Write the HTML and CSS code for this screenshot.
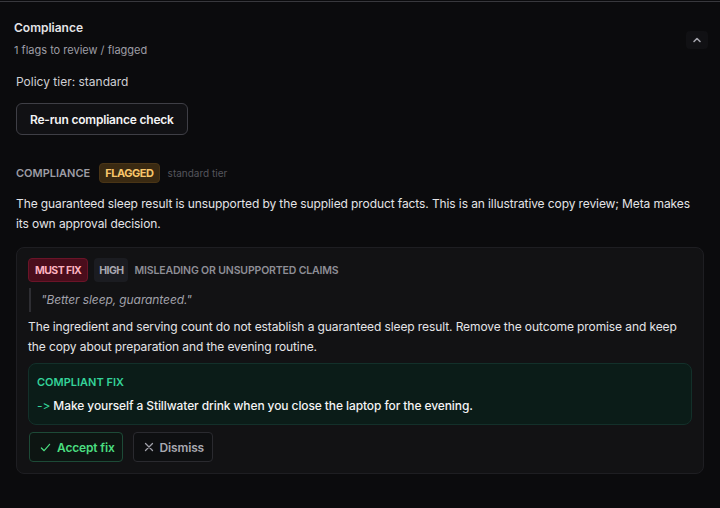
FILE: index.html
```html
<!DOCTYPE html>
<html lang="en">
<head>
<meta charset="utf-8">
<title>Compliance</title>
<link rel="stylesheet" href="styles.css">
</head>
<body>
<section class="panel">
  <header class="panel-head">
    <div class="head-text">
      <h2 class="title">Compliance</h2>
      <p class="subtitle">1 flags to review / flagged</p>
    </div>
    <button class="collapse" aria-label="Collapse">
      <svg width="10" height="10" viewBox="0 0 10 10"><path d="M2 6.5 L5 3.5 L8 6.5" fill="none" stroke="#a1a1aa" stroke-width="1.6" stroke-linecap="round" stroke-linejoin="round"/></svg>
    </button>
  </header>
  <div class="panel-body">
    <p class="tier">Policy tier: standard</p>
    <button class="btn-rerun">Re-run compliance check</button>

    <div class="status-row">
      <span class="status-label">COMPLIANCE</span>
      <span class="badge badge-flagged">FLAGGED</span>
      <span class="status-tier">standard tier</span>
    </div>
    <p class="summary">The guaranteed sleep result is unsupported by the supplied product facts. This is an illustrative copy review; Meta makes its own approval decision.</p>

    <article class="flag-card">
      <div class="flag-tags">
        <span class="badge badge-must">MUST FIX</span>
        <span class="badge badge-high">HIGH</span>
        <span class="flag-cat">MISLEADING OR UNSUPPORTED CLAIMS</span>
      </div>
      <blockquote class="quote">"Better sleep, guaranteed."</blockquote>
      <p class="reason">The ingredient and serving count do not establish a guaranteed sleep result. Remove the outcome promise and keep the copy about preparation and the evening routine.</p>
      <div class="fix-box">
        <div class="fix-label">COMPLIANT FIX</div>
        <div class="fix-text"><span class="arrow">-&gt;</span> Make yourself a Stillwater drink when you close the laptop for the evening.</div>
      </div>
      <div class="actions">
        <button class="btn-act btn-accept">
          <svg width="11" height="11" viewBox="0 0 12 12"><path d="M1.5 6.5 L4.5 9.5 L10.5 2.5" fill="none" stroke="#4ade80" stroke-width="1.3" stroke-linecap="round" stroke-linejoin="round"/></svg>
          Accept fix
        </button>
        <button class="btn-act btn-dismiss">
          <svg width="10" height="10" viewBox="0 0 10 10"><path d="M1.5 1.5 L8.5 8.5 M8.5 1.5 L1.5 8.5" fill="none" stroke="#a1a1aa" stroke-width="1.3" stroke-linecap="round"/></svg>
          Dismiss
        </button>
      </div>
    </article>
  </div>
</section>
</body>
</html>
```

FILE: styles.css
```css
* { box-sizing: border-box; }
html, body { margin: 0; padding: 0; background: #0b0b0d; }
body {
  font-family: Inter, "Liberation Sans", sans-serif;
  color: #e4e4e7;
  -webkit-font-smoothing: antialiased;
}
button { font-family: inherit; cursor: pointer; }

.panel {
  margin-top: 1px;
  border-top: 1px solid #38383d;
  height: 507px;
  background: #0b0b0d;
}

.panel-head {
  display: flex;
  justify-content: space-between;
  align-items: flex-start;
  padding: 17px 12px 5px 14px;
}
.title {
  margin: 0;
  font-size: 12px;
  line-height: 18px;
  font-weight: 600;
  color: #e4e4e7;
}
.subtitle {
  margin: 5px 0 0;
  font-size: 11px;
  line-height: 16px;
  color: #9d9da5;
}
.collapse {
  margin-top: 12px;
  width: 22px;
  height: 18px;
  border: 0;
  border-radius: 4px;
  background: #111114;
  display: flex;
  align-items: center;
  justify-content: center;
  padding: 0;
}

.panel-body {
  padding: 10px 16px 0;
}
.tier {
  margin: 0;
  font-size: 12px;
  line-height: 18px;
  color: #cfcfd4;
}
.btn-rerun {
  margin-top: 12px;
  height: 32px;
  padding: 0 13px;
  background: #111114;
  border: 1px solid #3f3f46;
  border-radius: 6px;
  color: #f4f4f5;
  font-size: 12px;
  font-weight: 600;
  letter-spacing: -0.2px;
}

.status-row {
  display: flex;
  align-items: center;
  gap: 8px;
  margin-top: 28px;
  height: 20px;
}
.status-label {
  font-size: 11px;
  font-weight: 600;
  color: #9d9da5;
}
.badge {
  display: inline-flex;
  align-items: center;
  font-size: 11px;
  font-weight: 700;
  border-radius: 4px;
  letter-spacing: -0.45px;
}
.badge-flagged {
  height: 20px;
  padding: 0 5px;
  margin-left: 1px;
  background: #3a2a12;
  color: #f8c66b;
  border: 1px solid #4a3516;
}
.status-tier {
  font-size: 10px;
  color: #55555c;
}
.summary {
  margin: 11px 0 0;
  font-size: 12px;
  line-height: 20px;
  letter-spacing: -0.1px;
  color: #e4e4e7;
}

.flag-card {
  margin-top: 13px;
  background: #121214;
  border: 1px solid #1e1e22;
  border-radius: 8px;
  padding: 10px 11px 11px;
}
.flag-tags {
  display: flex;
  align-items: center;
  gap: 6px;
}
.badge-must {
  height: 24px;
  padding: 0 6px;
  font-size: 10.5px;
  letter-spacing: -0.55px;
  background: #4a0d1c;
  border: 1px solid #6b1428;
  color: #fdb2c0;
}
.badge-high {
  height: 24px;
  padding: 0 5px;
  background: #1b1c21;
  color: #a8a8b0;
  font-size: 10.5px;
  letter-spacing: -0.6px;
}
.flag-cat {
  font-size: 10.5px;
  font-weight: 600;
  letter-spacing: -0.15px;
  color: #8e8e96;
}
.quote {
  margin: 6px 0 0 1px;
  padding: 3px 0 3px 10px;
  border-left: 2px solid #2e2e33;
  font-style: italic;
  font-size: 12px;
  line-height: 18px;
  letter-spacing: -0.1px;
  color: #a1a1aa;
}
.reason {
  margin: 5px 0 0;
  font-size: 12px;
  line-height: 20px;
  letter-spacing: -0.1px;
  color: #e4e4e7;
}
.fix-box {
  margin-top: 6px;
  background: #0b1c18;
  border: 1px solid #13302a;
  border-radius: 8px;
  padding: 10px 8px 9px;
}
.fix-label {
  font-size: 11px;
  line-height: 16px;
  font-weight: 600;
  color: #34d399;
}
.fix-text {
  margin-top: 7px;
  font-size: 12px;
  line-height: 18px;
  font-weight: 500;
  letter-spacing: -0.1px;
  color: #f4f4f5;
}
.arrow {
  color: #34d399;
  font-weight: 400;
  font-feature-settings: "calt" 0;
  font-variant-ligatures: none;
}

.actions {
  display: flex;
  gap: 10px;
  margin-top: 7px;
}
.btn-act {
  display: inline-flex;
  align-items: center;
  gap: 6px;
  height: 30px;
  border-radius: 4px;
  font-size: 12px;
  font-weight: 600;
  letter-spacing: -0.15px;
  background: #0e0f11;
}
.btn-accept {
  padding: 0 7px 0 10px;
  margin-left: 1px;
  border: 1px solid #1d4a37;
  color: #4ade80;
  background: #0d1512;
}
.btn-dismiss {
  padding: 0 8px 0 10px;
  border: 1px solid #2a2a2f;
  color: #a8a8b0;
}
```
